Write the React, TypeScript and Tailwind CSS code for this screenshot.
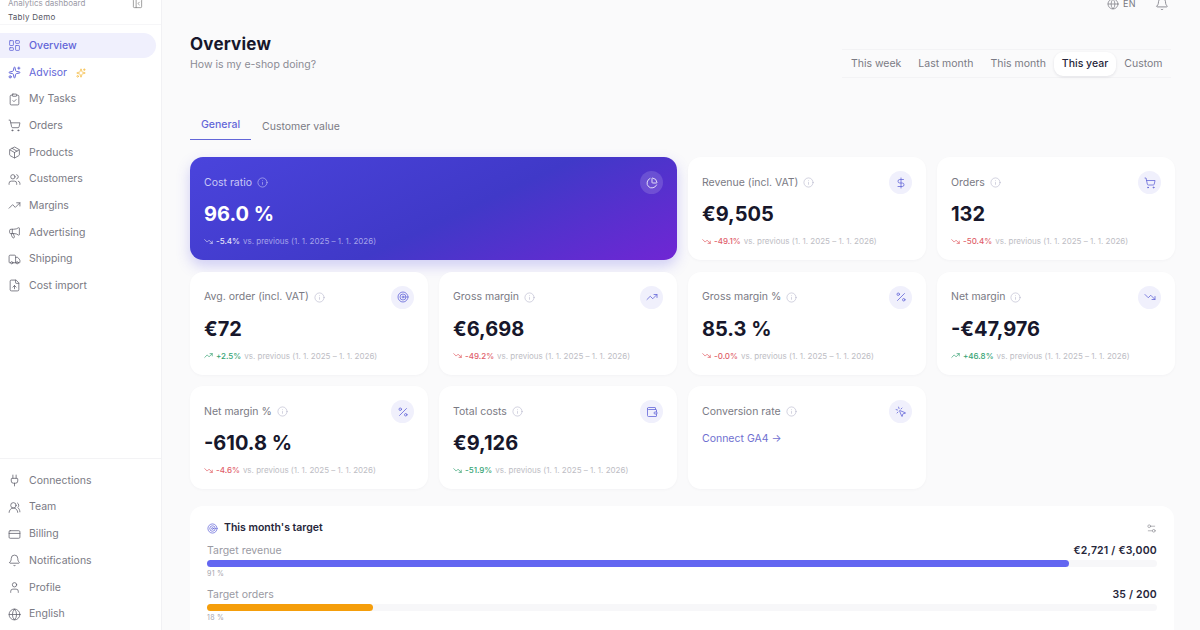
import React from 'react';
import {
  Bell, ClipboardCheck, CreditCard, DollarSign, FileUp, Globe, Info, LayoutDashboard, Megaphone,
  MousePointerClick, Package, PanelLeftClose, Percent, PieChart, Plug, Settings2, ShoppingCart,
  Sparkles, Target, TrendingDown, TrendingUp, Truck, User, Users, UsersRound, Wallet,
} from 'lucide-react';

const mainNav = [
  { label: 'My Tasks', icon: ClipboardCheck },
  { label: 'Orders', icon: ShoppingCart },
  { label: 'Products', icon: Package },
  { label: 'Customers', icon: Users },
  { label: 'Margins', icon: TrendingUp },
  { label: 'Advertising', icon: Megaphone },
  { label: 'Shipping', icon: Truck },
  { label: 'Cost import', icon: FileUp },
];

const bottomNav = [
  { label: 'Connections', icon: Plug },
  { label: 'Team', icon: UsersRound },
  { label: 'Billing', icon: CreditCard },
  { label: 'Notifications', icon: Bell },
  { label: 'Profile', icon: User },
  { label: 'English', icon: Globe },
];

const ranges = ['This week', 'Last month', 'This month', 'This year', 'Custom'];

const cards = [
  { title: 'Revenue (incl. VAT)', value: '€9,505', delta: '-49.1%', dir: 'down', tone: 'bad', icon: DollarSign },
  { title: 'Orders', value: '132', delta: '-50.4%', dir: 'down', tone: 'bad', icon: ShoppingCart },
  { title: 'Avg. order (incl. VAT)', value: '€72', delta: '+2.5%', dir: 'up', tone: 'good', icon: Target },
  { title: 'Gross margin', value: '€6,698', delta: '-49.2%', dir: 'down', tone: 'bad', icon: TrendingUp },
  { title: 'Gross margin %', value: '85.3 %', delta: '-0.0%', dir: 'down', tone: 'bad', icon: Percent },
  { title: 'Net margin', value: '-€47,976', delta: '+46.8%', dir: 'up', tone: 'good', icon: TrendingDown },
  { title: 'Net margin %', value: '-610.8 %', delta: '-4.6%', dir: 'down', tone: 'bad', icon: Percent },
  { title: 'Total costs', value: '€9,126', delta: '-51.9%', dir: 'down', tone: 'good', icon: Wallet },
];

const period = 'vs. previous (1. 1. 2025 – 1. 1. 2026)';

const App: React.FC = () => {
  return (
    <div className="flex h-[630px] w-[1200px] overflow-hidden bg-[#fafafb] font-['Inter',sans-serif] text-[#1a1a2e]">
      {/* Sidebar */}
      <aside className="flex h-[630px] w-[162px] shrink-0 flex-col overflow-hidden border-r border-[#f1f1f4] bg-white">
        <div className="-mt-[4px] h-[29px] shrink-0 border-b border-[#f6f6f8] pl-[8px] pr-[18px]">
          <div className="flex h-[14px] items-center justify-between text-[8px] text-[#9a9aa6]">
            <span>Analytics dashboard</span>
            <PanelLeftClose size={11} strokeWidth={1.5} className="text-[#777]" />
          </div>
          <div className="mt-[1px] text-[8px] leading-[13px] tracking-[0.25px] text-[#55555f]">Tably Demo</div>
        </div>

        <nav className="mt-[8px] flex flex-col">
          <a className="flex h-[25px] w-[156px] items-center gap-[8px] rounded-r-full rounded-l-[6px] bg-[#f0f0fd] pl-[8px] text-[10.5px] font-medium text-[#6366d8]">
            <LayoutDashboard size={13} strokeWidth={1.5} />
            Overview
          </a>
          <a className="mt-[1.4px] flex h-[26.6px] items-center gap-[8px] pl-[8px] text-[10.5px] text-[#6366d8]">
            <Sparkles size={13} strokeWidth={1.8} />
            Advisor
            <Sparkles size={10} strokeWidth={2} className="ml-[1px] text-[#f5c152]" />
          </a>
          {mainNav.map(item => (
            <a key={item.label} className="flex h-[26.65px] items-center gap-[8px] pl-[8px] text-[10.5px] text-[#7a7a84]">
              <item.icon size={13} strokeWidth={1.4} className="text-[#5c5c68]" />
              {item.label}
            </a>
          ))}
        </nav>

        <nav className="mt-auto flex flex-col border-t border-[#f3f3f5] pb-[2.6px] pt-[8px]">
          {bottomNav.map(item => (
            <a key={item.label} className="flex h-[26.7px] items-center gap-[8px] pl-[8px] text-[10.5px] text-[#7a7a84]">
              <item.icon size={13} strokeWidth={1.4} className="text-[#5c5c68]" />
              {item.label}
            </a>
          ))}
        </nav>
      </aside>

      {/* Main */}
      <main className="flex-1 overflow-hidden pl-[28px] pr-[25px]">
        <div className="-mt-[3px] flex h-[14px] items-center justify-end gap-[19px] pr-[6px] text-[9px] tracking-[0.4px] text-[#77777f]">
          <span className="flex items-center gap-[4px]">
            <Globe size={12} strokeWidth={1.4} />
            EN
          </span>
          <Bell size={14} strokeWidth={1.4} />
        </div>

        <div className="mt-[20px] flex h-[48px] items-start justify-between">
          <div>
            <h1 className="text-[17px] font-bold leading-[27px] tracking-[0.2px] text-[#17172b]">Overview</h1>
            <p className="text-[10.5px] leading-[14px] text-[#8b8b94]">How is my e-shop doing?</p>
          </div>
          <div className="mr-[4px] mt-[18px] flex h-[29px] items-center border-y border-[#f3f3f5] text-[10.5px] text-[#7a7a84]">
            {ranges.map(range => (
              <span
                key={range}
                className={
                  range === 'This year'
                    ? 'flex h-[24px] items-center rounded-[9px] bg-white px-[7.5px] font-medium text-[#26263a] shadow-[0_1px_3px_rgba(20,20,50,0.1)]'
                    : 'flex h-[24px] items-center px-[8.5px]'
                }
              >
                {range}
              </span>
            ))}
          </div>
        </div>

        <div className="mt-[31px] flex h-[30px] items-end text-[10.5px]">
          <span className="flex h-[30px] w-[61px] items-center justify-center border-b-[1.5px] border-[#6366d8] pt-[1px] font-medium text-[#6366d8]">General</span>
          <span className="ml-[11px] flex h-[30px] items-center pt-[3px] text-[#7a7a84]">Customer value</span>
        </div>

        <div className="mt-[17px] grid grid-cols-4 grid-rows-[103px_103px_103px] gap-x-[11px] gap-y-[11.5px]">
          <div className="col-span-2 rounded-[13px] bg-[linear-gradient(155deg,#4a44dc_0%,#4039c8_55%,#7026d4_100%)] pl-[14px] pr-[14px] pt-[14px] shadow-[0_6px_14px_rgba(79,70,229,0.25)]">
            <div className="flex h-[23px] items-center justify-between">
              <span className="flex items-center gap-[5px] text-[10.5px] text-[#c9c8f6]">
                Cost ratio
                <Info size={11} strokeWidth={1.3} />
              </span>
              <span className="flex h-[23px] w-[23px] items-center justify-center rounded-full bg-white/15 text-white">
                <PieChart size={12} strokeWidth={1.6} />
              </span>
            </div>
            <div className="mt-[5px] text-[20px] font-bold leading-[30px] text-white">96.0 %</div>
            <div className="mt-[6px] flex items-center gap-[3px] text-[8px] text-[#a5a3ea]">
              <TrendingDown size={9} strokeWidth={1.8} className="text-white/80" />
              <span className="font-medium text-[#e4e3fb]">-5.4%</span>
              <span>{period}</span>
            </div>
          </div>

          {cards.map(card => (
            <div key={card.title} className="rounded-[13px] bg-white pl-[14px] pr-[14px] pt-[14px] shadow-[0_1px_3px_rgba(20,20,50,0.03)]">
              <div className="flex h-[23px] items-center justify-between">
                <span className="flex items-center gap-[5px] text-[10.5px] text-[#7a7a84]">
                  {card.title}
                  <Info size={11} strokeWidth={1.1} className="text-[#a9a9c4]" />
                </span>
                <span className="flex h-[23px] w-[23px] items-center justify-center rounded-full bg-[#f0f0fc] text-[#6366d8]">
                  <card.icon size={12} strokeWidth={1.6} />
                </span>
              </div>
              <div className="mt-[5px] text-[20px] font-bold leading-[30px] text-[#17172b]">{card.value}</div>
              <div className="mt-[6px] flex items-center gap-[3px] whitespace-nowrap text-[8px] text-[#bdbdc4]">
                {card.dir === 'up' ? (
                  <TrendingUp size={9} strokeWidth={1.8} className="text-[#2f9e6e]" />
                ) : (
                  <TrendingDown size={9} strokeWidth={1.8} className={card.tone === 'good' ? 'text-[#2f9e6e]' : 'text-[#e0555c]'} />
                )}
                <span className={card.tone === 'good' ? 'font-medium text-[#35a374]' : 'font-medium text-[#e0606a]'}>{card.delta}</span>
                <span>{period}</span>
              </div>
            </div>
          ))}

          <div className="rounded-[13px] bg-white pl-[14px] pr-[14px] pt-[14px] shadow-[0_1px_3px_rgba(20,20,50,0.03)]">
            <div className="flex h-[23px] items-center justify-between">
              <span className="flex items-center gap-[5px] text-[10.5px] text-[#7a7a84]">
                Conversion rate
                <Info size={11} strokeWidth={1.1} className="text-[#a9a9c4]" />
              </span>
              <span className="flex h-[23px] w-[23px] items-center justify-center rounded-full bg-[#f0f0fc] text-[#6366d8]">
                <MousePointerClick size={12} strokeWidth={1.6} />
              </span>
            </div>
            <div className="mt-[8px] text-[10.5px] text-[#6f6fd0]">Connect GA4 →</div>
          </div>
        </div>

        <section className="mr-[1px] mt-[17px] rounded-t-[13px] bg-white px-[17px] pb-[20px] pt-[15px]">
          <div className="flex h-[14px] items-center justify-between">
            <span className="flex items-center gap-[6px] text-[10.5px] font-semibold text-[#26263a]">
              <Target size={11} strokeWidth={1.6} className="text-[#6366d8]" />
              This month's target
            </span>
            <Settings2 size={11} strokeWidth={1.4} className="text-[#8a8a92]" />
          </div>

          <div className="mt-[9px] flex h-[14px] items-center justify-between text-[10.5px]">
            <span className="text-[#9a9aa3]">Target revenue</span>
            <span className="font-semibold tracking-[0.2px] text-[#26263a]">€2,721 / €3,000</span>
          </div>
          <div className="mt-[2px] h-[7px] rounded-full bg-[#f7f7f9]">
            <div className="h-[7px] w-[90.7%] rounded-full bg-[#6366f1]" />
          </div>
          <div className="mt-[2px] text-[7px] leading-[10px] tracking-[0.3px] text-[#a5a5ad]">91 %</div>

          <div className="mt-[9px] flex h-[14px] items-center justify-between text-[10.5px]">
            <span className="text-[#9a9aa3]">Target orders</span>
            <span className="font-semibold tracking-[0.2px] text-[#26263a]">35 / 200</span>
          </div>
          <div className="mt-[2px] h-[7px] rounded-full bg-[#f7f7f9]">
            <div className="h-[7px] w-[17.5%] rounded-full bg-[#f59e0b]" />
          </div>
          <div className="mt-[2px] text-[7px] leading-[10px] tracking-[0.3px] text-[#a5a5ad]">18 %</div>
        </section>
      </main>
    </div>
  );
};

export default App;
